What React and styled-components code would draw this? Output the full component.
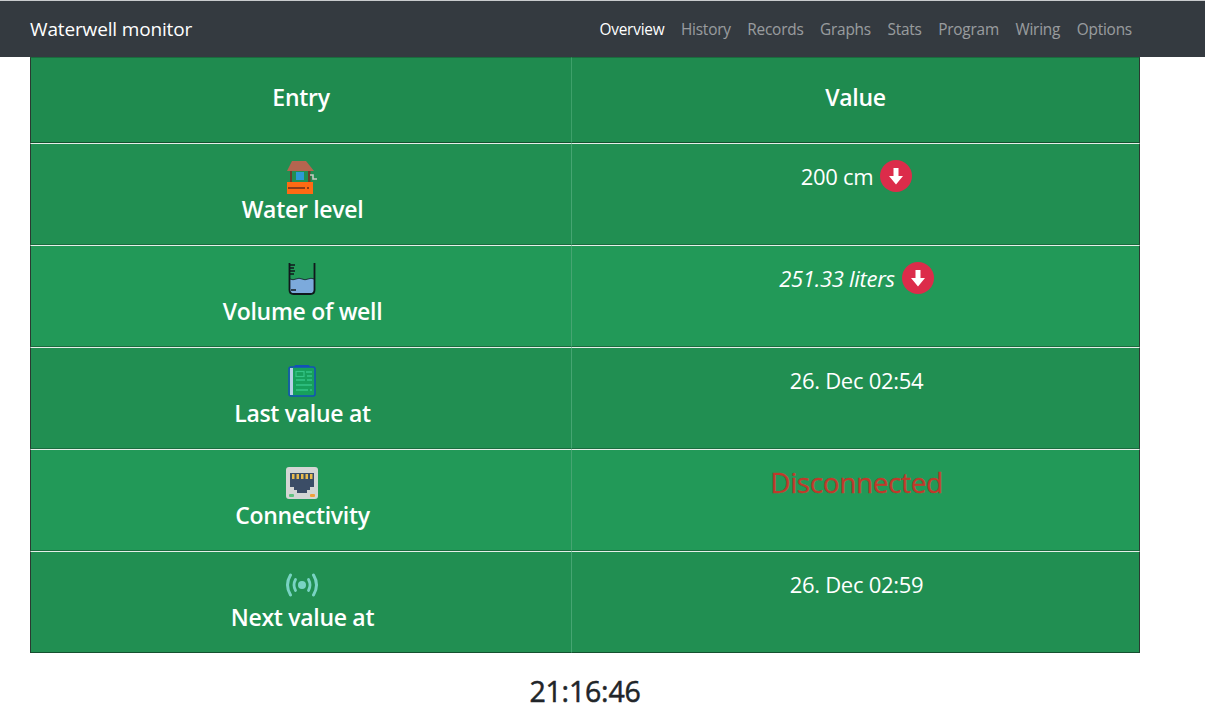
import React from 'react';
import styled, { createGlobalStyle } from 'styled-components';

const GlobalStyle = createGlobalStyle`
  html, body {
    margin: 0;
    padding: 0;
    background: #fff;
    font-family: "Open Sans", "Noto Sans", "Liberation Sans", sans-serif;
    color: #212529;
  }
`;

const Navbar = styled.nav`
  height: 56px;
  box-sizing: content-box;
  border-top: 1px solid #c9cbcd;
  background: #343a40;
  display: flex;
  align-items: center;
  justify-content: space-between;
  padding: 0 73px 0 30px;
`;
const Brand = styled.a`
  color: #fff;
  font-size: 19px;
  letter-spacing: -0.15px;
`;
const NavList = styled.div`
  display: flex;
  gap: 16.5px;
`;
const NavLink = styled.a`
  font-size: 15.36px;
  letter-spacing: -0.2px;
  color: ${(props) => (props.$active ? '#fff' : 'rgba(255,255,255,.5)')};
`;

const Container = styled.main`
  width: 1110px;
  margin: 0 auto 0 30px;
`;
const Table = styled.table`
  width: 100%;
  table-layout: fixed;
  border-collapse: separate;
  border-spacing: 0;
  color: #fff;
  text-align: center;
`;
const HeadCell = styled.th`
  height: 77px;
  padding: 0 0 7px;
  box-sizing: content-box;
  background: #1f8b4f;
  border-top: 1px solid #1a6b3e;
  border-bottom: 1px solid #14502f;
  border-left: ${(props) => (props.$first ? '1px solid #2b3a31' : '1px solid #3ea06a')};
  border-right: ${(props) => (props.$last ? '1px solid #2b3a31' : '0')};
  font-size: 23px;
  font-weight: 600;
  letter-spacing: -0.3px;
`;
const Cell = styled.td`
  height: 102px;
  box-sizing: border-box;
  padding: 16px 0 0;
  vertical-align: top;
  background: ${(props) => (props.$odd ? '#229958' : '#218f52')};
  border-top: 1px solid #e6efe9;
  border-bottom: ${(props) => (props.$end ? '1px solid #14502f' : '1px solid #1a6b3e')};
  border-left: ${(props) => (props.$first ? '1px solid #2b3a31' : '1px solid #46a572')};
  border-right: ${(props) => (props.$last ? '1px solid #2b3a31' : '0')};
`;
const IconWrap = styled.div`
  height: 34px;
  padding-left: 2px;
  display: flex;
  justify-content: center;
  align-items: center;
`;
const Label = styled.div`
  font-size: 23px;
  font-weight: 600;
  line-height: 30px;
  margin-left: 3px;
  letter-spacing: -0.3px;
`;
const Value = styled.div`
  display: flex;
  justify-content: center;
  align-items: center;
  gap: 7px;
  height: 36px;
  margin-top: -2px;
  padding-left: 2px;
  font-size: 22px;
  letter-spacing: -0.28px;
  font-style: ${(props) => (props.$italic ? 'italic' : 'normal')};
`;
const Disconnected = styled(Value)`
  font-size: 28px;
  color: #c0392b;
  letter-spacing: -0.4px;
  margin-top: -2px;
  -webkit-text-stroke: 0.3px #c0392b;
`;
const Clock = styled.h2`
  margin: 18px 0 0;
  text-align: center;
  font-size: 28.5px;
  line-height: 40px;
  font-weight: 500;
  letter-spacing: -0.2px;
  -webkit-text-stroke: 0.5px #212529;
`;

const DownBadge = () => (
  <svg width="32" height="32" viewBox="0 0 32 32">
    <circle cx="16" cy="16" r="16" fill="#dc2c4a" />
    <path d="M13.500 8h5v8h4.500L16 24.500 9 16h4.500z" fill="#fff" />
  </svg>
);

const WellIcon = () => (
  <svg width="32" height="33" viewBox="0 0 32 33">
    <path d="M6 0h14l8 10H1z" fill="#b5654f" />
    <rect x="4" y="10" width="2" height="11" fill="#6b3e2c" />
    <rect x="22" y="10" width="2.500" height="11" fill="#6b3e2c" />
    <rect x="10" y="11" width="8" height="8" fill="#2c9ad6" />
    <path d="M24 14h3v4h4" stroke="#c9c9c0" strokeWidth="1.600" fill="none" />
    <rect x="1" y="21" width="26" height="12" fill="#ff6a13" />
    <rect x="2" y="26" width="17" height="2" fill="#8a3c1a" />
    <rect x="21" y="26" width="2" height="2" fill="#8a3c1a" />
  </svg>
);

const BeakerIcon = () => (
  <svg width="32" height="32" viewBox="0 0 32 32">
    <path d="M4 16q3 1.500 6 0t6 0 6 0 6 0v11q0 3-3 3H7q-3 0-3-3z" fill="#7caadc" />
    <path d="M4 16q3 1.500 6 0t6 0 6 0 6 0" stroke="#10181c" strokeWidth="0.800" fill="none" />
    <path d="M3.500 0v27q0 4 4 4h17q4 0 4-4V0" stroke="#10181c" strokeWidth="1.800" fill="none" />
    <path d="M4 2h5M4 5h4M4 8h5M4 11h4M5 27h5" stroke="#10181c" strokeWidth="1.300" fill="none" />
  </svg>
);

const ClipboardIcon = () => (
  <svg width="32" height="32" viewBox="0 0 32 32">
    <rect x="3" y="2" width="26" height="29" rx="2" fill="#17a05c" stroke="#1350b8" strokeWidth="1.500" />
    <rect x="4" y="3" width="3" height="27" fill="#b9cfe8" />
    <path d="M9 2V0.500h14V2" fill="#1350b8" stroke="#1350b8" />
    <rect x="10" y="6.500" width="8" height="5" fill="none" stroke="#35c486" strokeWidth="1.200" />
    <path d="M20 7h6M21 11h5M10 15h9M21 15h5M10 20h16M10 25h12M24 25h2" stroke="#35c486" strokeWidth="1.300" />
  </svg>
);

const EthernetIcon = () => (
  <svg width="32" height="32" viewBox="0 0 32 32">
    <rect x="0" y="0" width="32" height="32" rx="3" fill="#d4d6d4" />
    <path d="M4 6h24v14h-4v3h-3v3H11v-3H8v-3H4z" fill="#3b4d66" />
    <path d="M6 7h2.500v5H6zM10.500 7h2.500v5h-2.500zM15 7h2.500v5H15zM19.500 7h2.500v5h-2.500zM24 7h2.500v5H24z" fill="#eabb4e" />
    <rect x="3" y="27" width="5" height="3" rx="1" fill="#5fc27f" />
    <rect x="24" y="27" width="5" height="3" rx="1" fill="#f0a13c" />
  </svg>
);

const SignalIcon = () => (
  <svg width="34" height="24" viewBox="0 0 34 24" fill="none" stroke="#79d3c3" strokeLinecap="round">
    <circle cx="17" cy="12" r="4" fill="#79d3c3" stroke="none" />
    <path d="M10.500 6.500q-3 5.500 0 11M23.500 6.500q3 5.500 0 11" strokeWidth="2.800" />
    <path d="M5.500 2q-6 10 0 20M28.500 2q6 10 0 20" strokeWidth="3" />
  </svg>
);

const rows = [
  { label: 'Water level', icon: <WellIcon />, value: <Value>200 cm <DownBadge /></Value> },
  { label: 'Volume of well', icon: <BeakerIcon />, value: <Value $italic>251.33 liters <DownBadge /></Value> },
  { label: 'Last value at', icon: <ClipboardIcon />, value: <Value>26. Dec 02:54</Value> },
  { label: 'Connectivity', icon: <EthernetIcon />, value: <Disconnected>Disconnected</Disconnected> },
  { label: 'Next value at', icon: <SignalIcon />, value: <Value>26. Dec 02:59</Value> },
];

const links = ['Overview', 'History', 'Records', 'Graphs', 'Stats', 'Program', 'Wiring', 'Options'];

export default function App() {
  return (
    <>
      <GlobalStyle />
      <Navbar>
        <Brand>Waterwell monitor</Brand>
        <NavList>
          {links.map((l, i) => <NavLink key={l} $active={i === 0}>{l}</NavLink>)}
        </NavList>
      </Navbar>
      <Container>
        <Table>
          <colgroup>
            <col style={{ width: 541 }} />
            <col />
          </colgroup>
          <thead>
            <tr>
              <HeadCell $first>Entry</HeadCell>
              <HeadCell $last>Value</HeadCell>
            </tr>
          </thead>
          <tbody>
            {rows.map((r, i) => (
              <tr key={r.label}>
                <Cell $first $odd={i % 2 === 1} $end={i === rows.length - 1}>
                  <IconWrap>{r.icon}</IconWrap>
                  <Label>{r.label}</Label>
                </Cell>
                <Cell $last $odd={i % 2 === 1} $end={i === rows.length - 1}>{r.value}</Cell>
              </tr>
            ))}
          </tbody>
        </Table>
        <Clock>21:16:46</Clock>
      </Container>
    </>
  );
}
